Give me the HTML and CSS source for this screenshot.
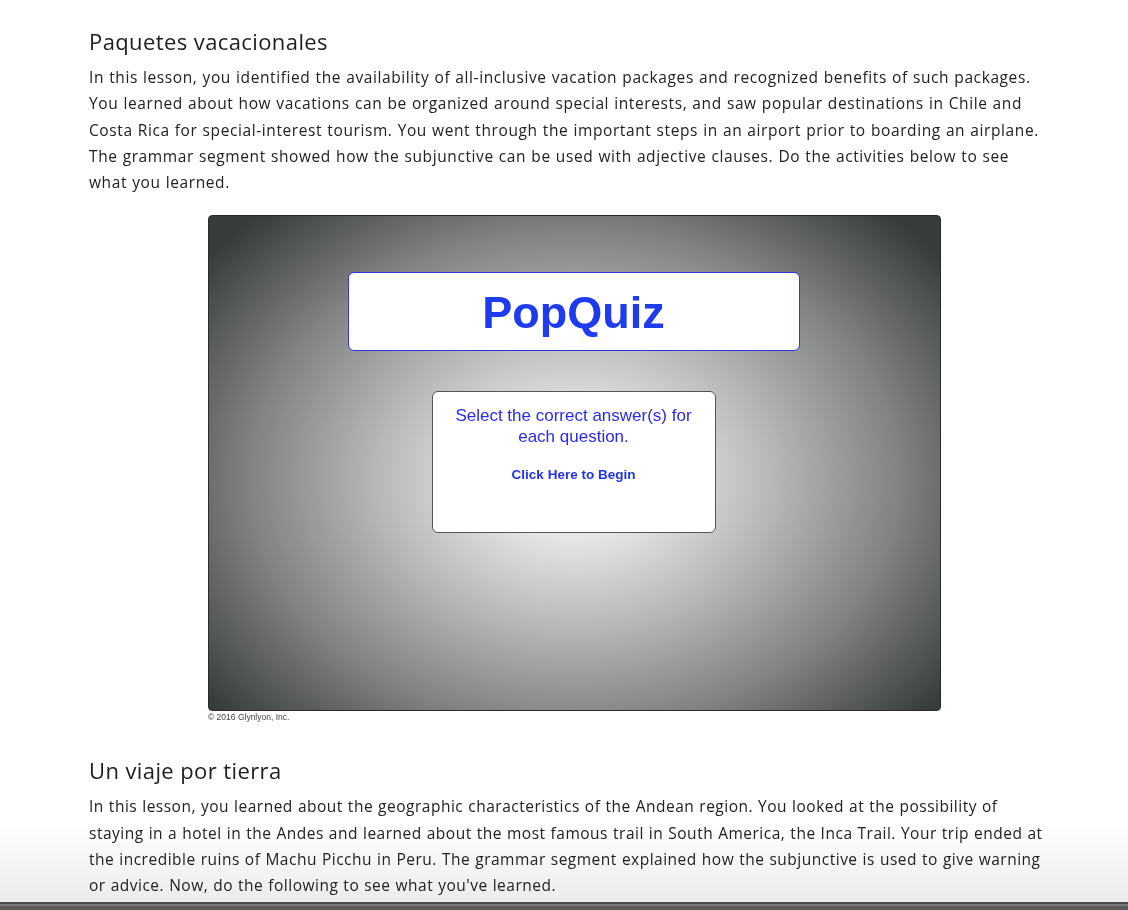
FILE: index.html
```html
<!DOCTYPE html>
<html>
<head>
<meta charset="utf-8">
<link rel="stylesheet" href="styles.css">
</head>
<body>
<main class="page">
  <section class="lesson">
    <h2 class="lesson-title">Paquetes vacacionales</h2>
    <p class="lesson-text">In this lesson, you identified the availability of all-inclusive vacation packages and recognized benefits of such packages. You learned about how vacations can be organized around special interests, and saw popular destinations in Chile and Costa Rica for special-interest tourism. You went through the important steps in an airport prior to boarding an airplane. The grammar segment showed how the subjunctive can be used with adjective clauses. Do the activities below to see what you learned.</p>
    <figure class="quiz-figure">
      <div class="quiz">
        <div class="quiz-title">PopQuiz</div>
        <div class="quiz-card">
          <div class="quiz-instr">Select the correct answer(s) for each question.</div>
          <div class="quiz-begin">Click Here to Begin</div>
        </div>
      </div>
      <figcaption class="copyright">© 2016 Glynlyon, Inc.</figcaption>
    </figure>
  </section>
  <section class="lesson">
    <h2 class="lesson-title">Un viaje por tierra</h2>
    <p class="lesson-text lesson-text--tight">In this lesson, you learned about the geographic characteristics of the Andean region. You looked at the possibility of staying in a hotel in the Andes and learned about the most famous trail in South America, the Inca Trail. Your trip ended at the incredible ruins of Machu Picchu in Peru. The grammar segment explained how the subjunctive is used to give warning or advice. Now, do the following to see what you've learned.</p>
  </section>
</main>
<div class="bottom-fade"></div>
<div class="bottom-bar"></div>
</body>
</html>
```

FILE: styles.css
```css
html, body {
  margin: 0;
  padding: 0;
  background: #ffffff;
}
body {
  font-family: "Open Sans", "Liberation Sans", sans-serif;
  color: #222;
  overflow: hidden;
  height: 910px;
}
.page {
  position: relative;
  z-index: 1;
  padding: 26px 0 0 89px;
  width: 962px;
}
.lesson-title {
  margin: 0;
  font-size: 22px;
  font-weight: 500;
  letter-spacing: 0.4px;
  line-height: 30px;
  color: #1e1e1e;
}
.lesson-text {
  margin: 8px 0 0 0;
  font-size: 15.5px;
  letter-spacing: 0.6px;
  word-spacing: 0.5px;
  line-height: 26.3px;
  color: #222;
}
.lesson-text--tight {
  letter-spacing: 0.5px;
}
.quiz-figure {
  margin: 20px 0 0 119px;
  width: 733px;
}
.quiz {
  box-sizing: border-box;
  width: 733px;
  height: 496px;
  border: 1px solid #2a2a2a;
  border-radius: 4px;
  background: radial-gradient(ellipse 64% 72% at 50% 53%, #ffffff 0%, #e4e4e4 18%, #b8b8b8 42%, #808181 70%, #505353 90%, #383b3b 100%);
  display: flex;
  flex-direction: column;
  align-items: center;
  padding-top: 56px;
  font-family: "Liberation Sans", Arial, sans-serif;
}
.quiz-title {
  box-sizing: border-box;
  width: 452px;
  height: 79px;
  margin-left: -2px;
  background: #fff;
  border: 1px solid #3333dd;
  border-radius: 6px;
  display: flex;
  align-items: center;
  justify-content: center;
  font-size: 45px;
  font-weight: bold;
  color: #1f3bf0;
  padding-top: 2px;
}
.quiz-card {
  box-sizing: border-box;
  width: 284px;
  height: 142px;
  margin-top: 40px;
  margin-left: -2px;
  background: #fff;
  border: 1px solid #555;
  border-radius: 6px;
  text-align: center;
  padding: 13px 10px 0;
}
.quiz-instr {
  font-size: 17px;
  line-height: 21px;
  color: #2b2bea;
}
.quiz-begin {
  margin-top: 20px;
  font-size: 13.5px;
  font-weight: bold;
  color: #2233dd;
}
.copyright {
  margin: 1px 0 0 0;
  font-family: "Liberation Sans", Arial, sans-serif;
  font-size: 8.5px;
  color: #444;
}
.lesson + .lesson {
  margin-top: 33px;
}
.bottom-fade {
  position: fixed;
  z-index: 0;
  left: 0;
  right: 0;
  bottom: 8px;
  height: 80px;
  background: linear-gradient(to bottom, rgba(236,236,236,0) 0%, #ececec 100%);
  pointer-events: none;
}
.bottom-bar {
  position: fixed;
  z-index: 2;
  left: 0;
  right: 0;
  bottom: 0;
  height: 8px;
  background: linear-gradient(to bottom, #4a4949 0px, #4a4949 2px, #777 2px, #777 4px, #5d5b5c 4px);
}
```
